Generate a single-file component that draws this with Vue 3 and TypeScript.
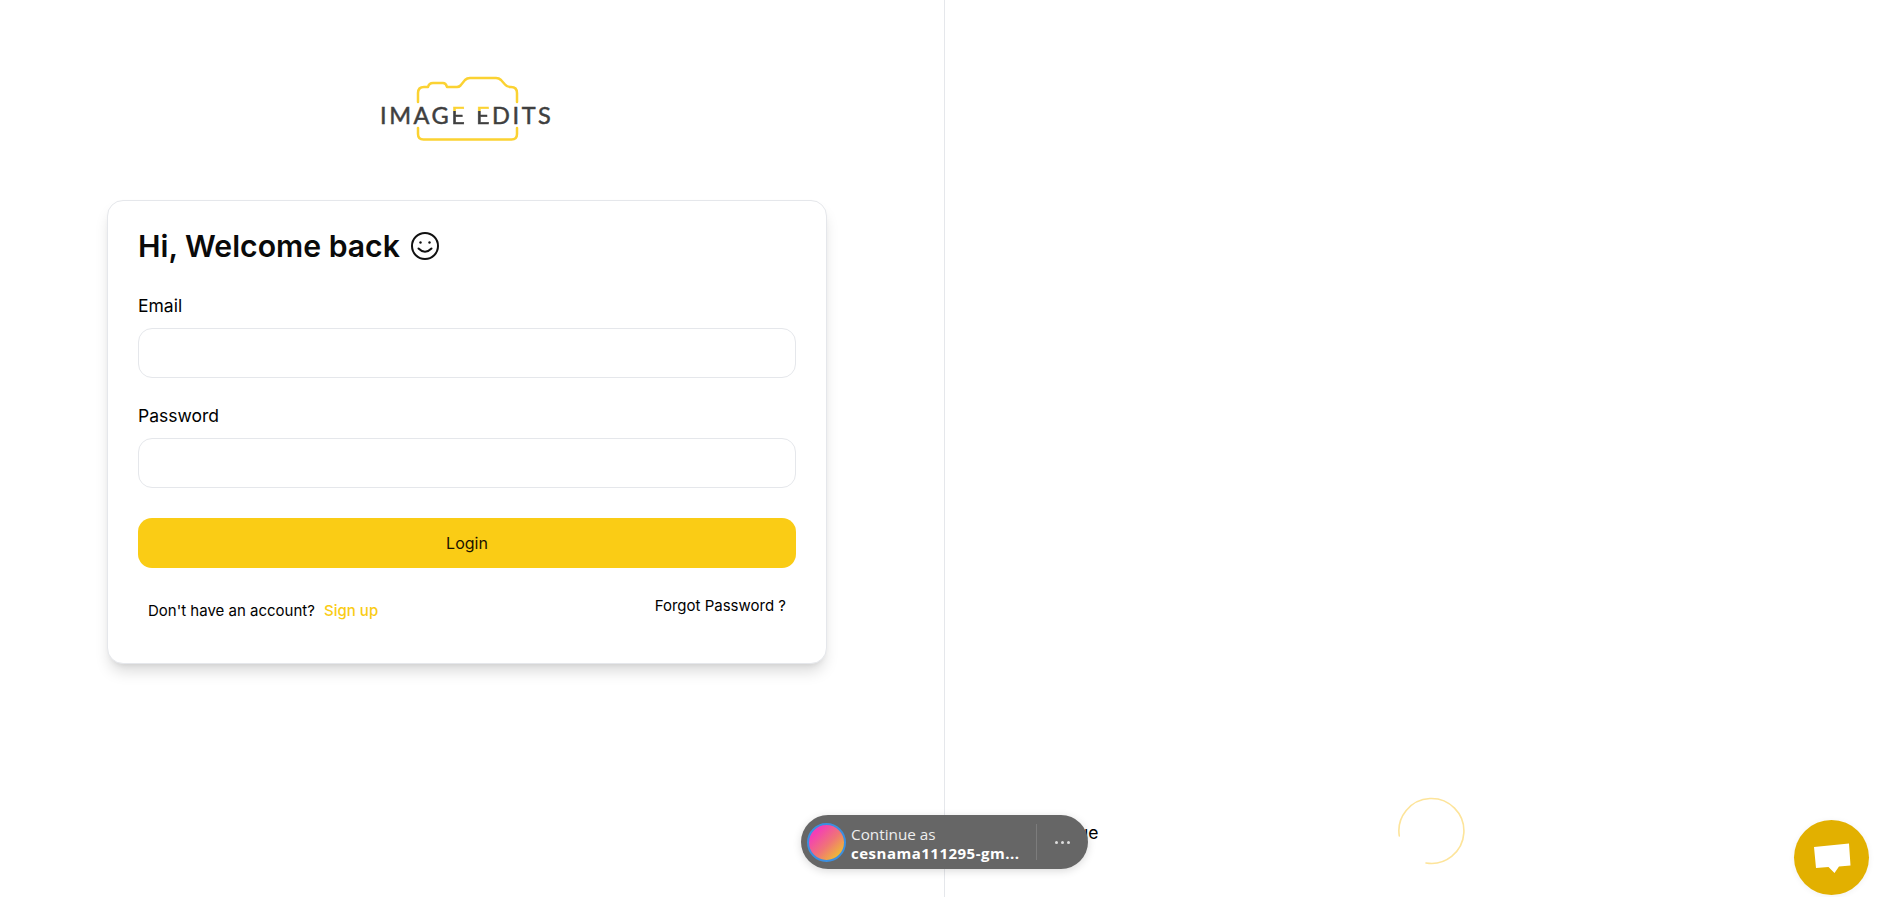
<script setup lang="ts">
import { ref } from 'vue'
const email = ref<string>('')
const password = ref<string>('')
</script>

<template>
  <div class="page">
    <section class="left">
      <div class="logo">
        <svg class="camera" width="104" height="66" viewBox="0 0 104 66" fill="none">
          <path d="M3 26V17Q3 11 9 11H13Q14 7 18 7H28Q31 7 32 11H42Q44 11 45.500 9.500L50 4Q52 2 55 2H81Q84 2 86 4L90 8.500Q92 11 95 11H96Q102 11 102 17V26" stroke="#fbd232" stroke-width="2.500" stroke-linecap="round" stroke-linejoin="round" />
          <path d="M3 52V58Q3 63.500 8.500 63.500H96.500Q102 63.500 102 58V52" stroke="#fbd232" stroke-width="2.500" stroke-linecap="round" stroke-linejoin="round" />
        </svg>
        <span class="logo-text">IMAG<span class="logo-e">E</span> <span class="logo-e">E</span>DITS</span>
      </div>
      <form class="card" @submit.prevent>
        <h1 class="title">
          Hi, Welcome back
          <svg class="smile" width="30" height="30" viewBox="0 0 30 30" fill="none" stroke="#111" stroke-width="2">
            <circle cx="15" cy="15" r="13" />
            <circle cx="10.500" cy="11.500" r="1.200" fill="#111" stroke="none" />
            <circle cx="19.500" cy="11.500" r="1.200" fill="#111" stroke="none" />
            <path d="M8.500 17.500Q15 24 21.500 17.500" stroke-linecap="round" />
          </svg>
        </h1>
        <label class="field">
          <span class="label">Email</span>
          <input v-model="email" class="input" type="email" />
        </label>
        <label class="field">
          <span class="label">Password</span>
          <input v-model="password" class="input" type="password" />
        </label>
        <button class="login" type="submit">Login</button>
        <div class="links">
          <p class="signup">Don't have an account? <a class="accent">Sign up</a></p>
          <a class="forgot">Forgot Password ?</a>
        </div>
      </form>
    </section>
    <section class="right">
      <span class="hidden-text">Continue</span>
      <svg class="spinner" width="68" height="68" viewBox="0 0 68 68" fill="none">
        <path d="M2.300 39A32.500 32.500 0 1 1 29 66" stroke="#fde49a" stroke-width="1.600" stroke-linecap="round" />
      </svg>
    </section>

    <div class="one-tap">
      <span class="avatar"></span>
      <span class="one-tap-text">
        <span class="continue">Continue as</span>
        <strong class="user">cesnama111295-gm...</strong>
      </span>
      <span class="more"><i></i><i></i><i></i></span>
    </div>
    <button class="chat" aria-label="Chat">
      <svg width="38" height="32" viewBox="0 0 38 32" fill="#fff">
        <path d="M1 5L36 1.500L37.500 23.500L26 24.500L21.500 31L15.500 25L3 26Z" />
      </svg>
    </button>
  </div>
</template>

<style scoped>
.page {
  display: flex;
  height: 897px;
  overflow: hidden;
  position: relative;
  background: #fff;
  color: #000;
  font-family: Inter, "Liberation Sans", sans-serif;
}
.left {
  width: 945px;
  flex: none;
  box-sizing: border-box;
  border-right: 1px solid #e5e7eb;
  padding-left: 107px;
  padding-top: 76px;
}
.logo {
  width: 720px;
  height: 66px;
  position: relative;
  display: flex;
  justify-content: center;
  margin-bottom: 58px;
}
.logo-text {
  position: absolute;
  top: 27px;
  left: 273px;
  font-family: Lato, sans-serif;
  font-size: 23.500px;
  line-height: 24px;
  letter-spacing: 2.550px;
  color: #3f3f3f;
  -webkit-text-stroke: 0.5px #3f3f3f;
  white-space: nowrap;
}
.logo-e {
  background: linear-gradient(#fbd232 36%, #3f3f3f 36%);
  -webkit-background-clip: text;
  background-clip: text;
  color: transparent;
  -webkit-text-stroke: 0.5px transparent;
}
.card {
  width: 720px;
  height: 464px;
  box-sizing: border-box;
  border: 1px solid #e5e7eb;
  border-radius: 16px;
  padding: 30px 30px 0;
  background: #fff;
  box-shadow: 0 10px 15px -3px rgba(0, 0, 0, 0.15), 0 4px 6px -4px rgba(0, 0, 0, 0.1);
}
.title {
  display: flex;
  align-items: center;
  gap: 10px;
  margin: 0 0 33px;
  font-size: 30.200px;
  line-height: 30px;
  font-weight: 600;
  color: #0a0a0a;
}
.smile { flex: none; }
.field {
  display: block;
  margin-bottom: 26px;
}
.label {
  display: block;
  font-size: 17.500px;
  line-height: 24px;
  margin-bottom: 10px;
}
.input {
  display: block;
  width: 100%;
  height: 50px;
  box-sizing: border-box;
  border: 1px solid #e5e7eb;
  border-radius: 14px;
  background: #fff;
  outline: none;
}
.login {
  display: block;
  width: 100%;
  height: 50px;
  margin-top: 30px;
  border: 0;
  border-radius: 14px;
  background: #facc15;
  color: #1a1200;
  font: 400 16px Inter, sans-serif;
}
.links {
  display: flex;
  justify-content: space-between;
  padding: 0 10px;
  margin-top: 28px;
  font-size: 15px;
  line-height: 20px;
}
.signup {
  margin: 5px 0 0;
}
.accent {
  margin-left: 5px;
  color: #facc15;
  font-weight: 500;
}
.right {
  flex: 1;
  display: flex;
  align-items: flex-end;
  padding-bottom: 32px;
  padding-left: 79px;
}
.hidden-text {
  font-size: 17.500px;
  line-height: 24px;
  margin-bottom: 20px;
}
.spinner {
  margin-left: 299px;
  flex: none;
}
.one-tap {
  position: absolute;
  left: 801px;
  top: 815px;
  width: 287px;
  height: 54px;
  box-sizing: border-box;
  display: flex;
  align-items: center;
  border-radius: 27px;
  background: #666;
  color: #fff;
  padding-left: 6px;
  box-shadow: 0 2px 8px rgba(0, 0, 0, 0.15);
  font-family: "Open Sans", "Liberation Sans", sans-serif;
}
.avatar {
  flex: none;
  width: 35px;
  height: 35px;
  border-radius: 50%;
  border: 2px solid #3b8fe0;
  background: linear-gradient(135deg, #f43fb5 20%, #f07575 55%, #eec22e 90%);
  box-sizing: content-box;
  margin-right: 5px;
}
.one-tap-text {
  display: flex;
  flex-direction: column;
  width: 185px;
  padding-top: 3px;
  font-size: 15.300px;
  line-height: 19px;
}
.continue { color: #eee; }
.user {
  font-weight: 700;
  font-size: 15px;
  letter-spacing: 0.5px;
  white-space: nowrap;
}
.more {
  flex: 1;
  height: 36px;
  display: flex;
  align-items: center;
  justify-content: center;
  gap: 3px;
  border-left: 1px solid #7c7c7c;
}
.more i {
  width: 3px;
  height: 3px;
  border-radius: 50%;
  background: #ddd;
}
.chat {
  position: absolute;
  left: 1794px;
  top: 820px;
  width: 75px;
  height: 75px;
  padding: 0;
  border: 0;
  border-radius: 50%;
  background: #e2b000;
  display: flex;
  align-items: center;
  justify-content: center;
  box-shadow: 0 1px 6px rgba(0, 0, 0, 0.06);
}
</style>

<style>
html, body { margin: 0; overflow: hidden; }
</style>
